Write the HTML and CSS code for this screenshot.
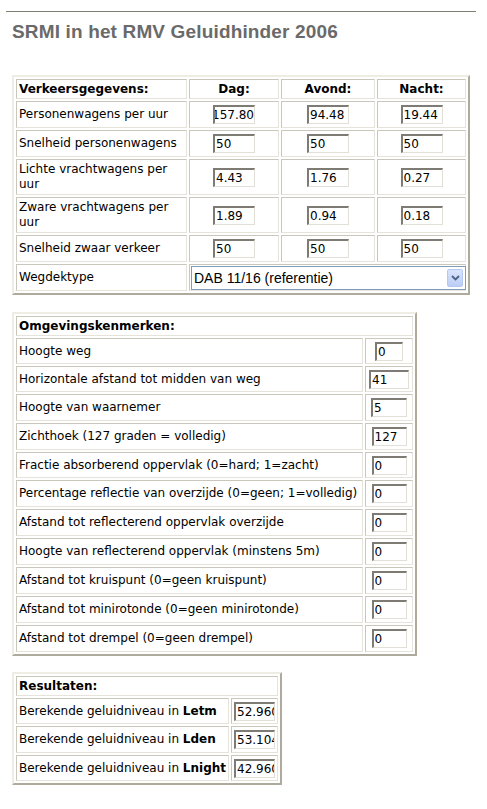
FILE: index.html
```html
<!DOCTYPE html>
<html lang="nl">
<head>
<meta charset="utf-8">
<title>SRMI in het RMV Geluidhinder 2006</title>
<link rel="stylesheet" href="styles.css">
</head>
<body>
<div class="page">
  <hr class="rule">
  <h1 class="title">SRMI in het RMV Geluidhinder 2006</h1>

  <table class="grid t1">
    <colgroup><col class="w1"><col class="w2"><col class="w3"><col class="w4"></colgroup>
    <tr class="h20">
      <th class="lbl">Verkeersgegevens:</th><th>Dag:</th><th>Avond:</th><th>Nacht:</th>
    </tr>
    <tr class="h27">
      <td class="lbl">Personenwagens per uur</td>
      <td><input class="fld w42 scrolled" value="157.80"></td>
      <td><input class="fld w42" value="94.48"></td>
      <td><input class="fld w42" value="19.44"></td>
    </tr>
    <tr class="h27">
      <td class="lbl">Snelheid personenwagens</td>
      <td><input class="fld w42" value="50"></td>
      <td><input class="fld w42" value="50"></td>
      <td><input class="fld w42" value="50"></td>
    </tr>
    <tr class="h36">
      <td class="lbl">Lichte vrachtwagens per uur</td>
      <td><input class="fld w42" value="4.43"></td>
      <td><input class="fld w42" value="1.76"></td>
      <td><input class="fld w42" value="0.27"></td>
    </tr>
    <tr class="h36">
      <td class="lbl">Zware vrachtwagens per uur</td>
      <td><input class="fld w42" value="1.89"></td>
      <td><input class="fld w42" value="0.94"></td>
      <td><input class="fld w42" value="0.18"></td>
    </tr>
    <tr class="h27">
      <td class="lbl">Snelheid zwaar verkeer</td>
      <td><input class="fld w42" value="50"></td>
      <td><input class="fld w42" value="50"></td>
      <td><input class="fld w42" value="50"></td>
    </tr>
    <tr class="h27">
      <td class="lbl">Wegdektype</td>
      <td colspan="3" class="selcell">
        <div class="sel">
          <span class="sel-text">DAB 11/16 (referentie)</span>
          <span class="sel-btn">
            <svg width="9" height="6" viewBox="0 0 9 6"><path d="M1 1 L4.5 4.5 L8 1" fill="none" stroke="#4d6185" stroke-width="1.8"/></svg>
          </span>
        </div>
      </td>
    </tr>
  </table>

  <table class="grid t2">
    <colgroup><col class="v1"><col class="v2"></colgroup>
    <tr class="h20"><th colspan="2" class="lbl">Omgevingskenmerken:</th></tr>
    <tr class="h26"><td class="lbl">Hoogte weg</td><td><input class="fld w28" value="0"></td></tr>
    <tr class="h26"><td class="lbl">Horizontale afstand tot midden van weg</td><td><input class="fld w40" value="41"></td></tr>
    <tr class="h27"><td class="lbl">Hoogte van waarnemer</td><td><input class="fld w36" value="5"></td></tr>
    <tr class="h27"><td class="lbl">Zichthoek (127 graden = volledig)</td><td><input class="fld w35" value="127"></td></tr>
    <tr class="h26"><td class="lbl">Fractie absorberend oppervlak (0=hard; 1=zacht)</td><td><input class="fld w35" value="0"></td></tr>
    <tr class="h27"><td class="lbl">Percentage reflectie van overzijde (0=geen; 1=volledig)</td><td><input class="fld w35" value="0"></td></tr>
    <tr class="h27"><td class="lbl">Afstand tot reflecterend oppervlak overzijde</td><td><input class="fld w35" value="0"></td></tr>
    <tr class="h27"><td class="lbl">Hoogte van reflecterend oppervlak (minstens 5m)</td><td><input class="fld w35" value="0"></td></tr>
    <tr class="h27"><td class="lbl">Afstand tot kruispunt (0=geen kruispunt)</td><td><input class="fld w35" value="0"></td></tr>
    <tr class="h27"><td class="lbl">Afstand tot minirotonde (0=geen minirotonde)</td><td><input class="fld w35" value="0"></td></tr>
    <tr class="h27"><td class="lbl">Afstand tot drempel (0=geen drempel)</td><td><input class="fld w35" value="0"></td></tr>
  </table>

  <table class="grid t3">
    <colgroup><col class="u1"><col class="u2"></colgroup>
    <tr class="h20"><th colspan="2" class="lbl">Resultaten:</th></tr>
    <tr class="h26"><td class="lbl">Berekende geluidniveau in <b>Letm</b></td><td><input class="fld w41" value="52.96014"></td></tr>
    <tr class="h27"><td class="lbl">Berekende geluidniveau in <b>Lden</b></td><td><input class="fld w41" value="53.10452"></td></tr>
    <tr class="h26"><td class="lbl">Berekende geluidniveau in <b>Lnight</b></td><td><input class="fld w41" value="42.96014"></td></tr>
  </table>
</div>
</body>
</html>
```

FILE: styles.css
```css
html, body {
  margin: 0;
  padding: 0;
  background: #ffffff;
}

.page {
  padding: 11px 11px 20px 6px;
  font-family: "DejaVu Sans", Verdana, sans-serif;
  font-size: 12px;
  color: #000;
}

.rule {
  margin: 0;
  border: 0;
  height: 1px;
  background: #807d74;
}

.title {
  margin: 9px 0 0 6px;
  font-family: "Liberation Sans", Arial, sans-serif;
  font-size: 19px;
  line-height: 22px;
  letter-spacing: 0.15px;
  font-weight: bold;
  color: #6a6a6a;
}

.grid {
  margin-left: 6px;
  border-collapse: separate;
  border-spacing: 2px;
  border-style: solid;
  border-width: 2px;
  border-color: #efede3 #aeab9d #aeab9d #efede3;
  table-layout: fixed;
  background: #fff;
}

.grid th,
.grid td {
  box-sizing: border-box;
  border: 1px solid;
  border-color: #c9c6bb #e6e4da #e6e4da #c9c6bb;
  padding: 0 2px;
  font-size: 12px;
  line-height: 15px;
  vertical-align: middle;
  text-align: center;
}

.grid th {
  font-weight: bold;
}

.grid .lbl {
  text-align: left;
  padding: 0 0 0 2px;
}

.t2 .lbl,
.t3 .lbl {
  white-space: nowrap;
  overflow: hidden;
}

.grid b {
  font-weight: bold;
}

.t1 { width: 458px; margin-top: 32px; }
.t1 .w1 { width: 171px; }
.t1 .w2 { width: 90px; }
.t1 .w3 { width: 94px; }
.t1 .w4 { width: 89px; }

.t2 { width: 405px; margin-top: 17px; }
.t2 .v1 { width: 347px; }
.t2 .v2 { width: 48px; }

.t3 { width: 270px; margin-top: 16px; }
.t3 .u1 { width: 213px; }
.t3 .u2 { width: 47px; }

.h20 > * { height: 20px; }
.h26 > * { height: 26px; }
.h27 > * { height: 27px; }
.h36 > * { height: 36px; }

.fld {
  box-sizing: border-box;
  display: block;
  margin: 0 auto;
  height: 19px;
  padding: 0 0 0 1px;
  border-style: solid;
  border-width: 2px 1px 1px 2px;
  border-color: #7d7b74 #e2e0d6 #e2e0d6 #7d7b74;
  background: #fff;
  font-family: "DejaVu Sans", Verdana, sans-serif;
  font-size: 12px;
  line-height: 15px;
  color: #000;
  outline: none;
}

.scrolled {
  direction: rtl;
  text-align: left;
  padding-left: 0;
}

.w28 { width: 28px; }
.w35 { width: 35px; }
.w36 { width: 36px; }
.w40 { width: 40px; }
.w41 { width: 41px; }
.w42 { width: 42px; }

.grid .selcell {
  padding: 0 1px;
}

.sel {
  box-sizing: border-box;
  width: 275px;
  height: 24px;
  margin: 0 auto;
  border: 1px solid #7f9db9;
  background: #fff;
  display: flex;
  align-items: center;
  justify-content: space-between;
  padding: 0 2px 0 2px;
}

.sel-text {
  font-family: "Liberation Sans", Arial, sans-serif;
  font-size: 14px;
  color: #000;
  line-height: 16px;
}

.sel-btn {
  box-sizing: border-box;
  width: 16px;
  height: 18px;
  border: 1px solid #b5c8f2;
  border-radius: 2px;
  background: linear-gradient(#d9e4fc, #bccdf6);
  display: flex;
  align-items: center;
  justify-content: center;
}
```
